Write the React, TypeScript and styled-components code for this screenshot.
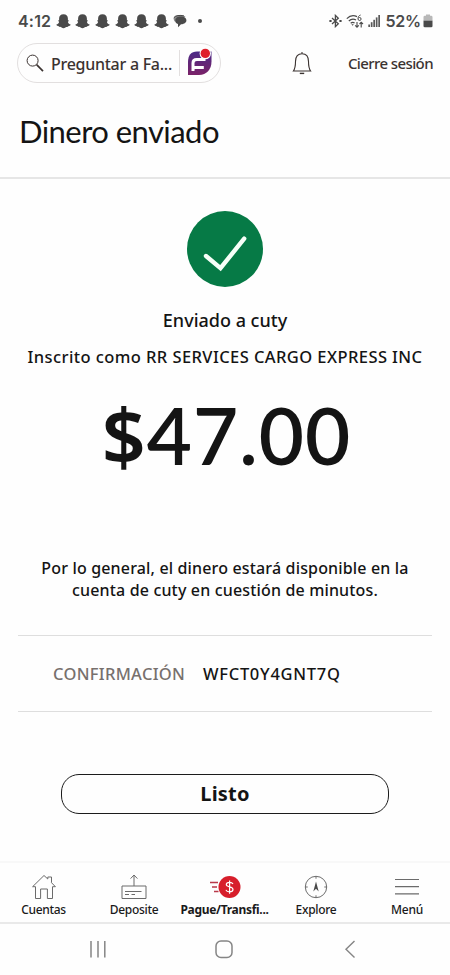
import React from 'react';
import styled, { createGlobalStyle } from 'styled-components';

const GlobalStyle = createGlobalStyle`
  * {
    box-sizing: border-box;
  }

  body {
    margin: 0;
    background: #fefefe;
    color: #141414;
    font-family: 'Noto Sans', 'Open Sans', sans-serif;
  }
`;

const Screen = styled.div`
  display: flex;
  flex-direction: column;
  width: 450px;
  height: 975px;
  overflow: hidden;
`;

const StatusBar = styled.div`
  display: flex;
  align-items: center;
  justify-content: space-between;
  height: 42px;
  padding: 0 17px 0 18px;
  color: #4a4a4a;
`;

const StatusGroup = styled.div<{ $gap: number }>`
  display: flex;
  align-items: center;
  gap: ${props => props.$gap}px;
`;

const StatusText = styled.span<{ $spacing?: number }>`
  font-family: Inter, 'Noto Sans', sans-serif;
  font-size: 16px;
  font-weight: 600;
  line-height: 20px;
  letter-spacing: ${props => props.$spacing ?? 0}px;
`;

const Dot = styled.span`
  width: 4px;
  height: 4px;
  margin-left: 6px;
  border-radius: 50%;
  background: #4a4a4a;
`;

const Header = styled.header`
  display: flex;
  align-items: center;
  height: 42px;
  padding: 0 17px;
`;

const SearchPill = styled.div`
  display: flex;
  align-items: center;
  width: 204px;
  height: 40px;
  padding: 0 7px 0 8px;
  border: 1px solid #e2dfdf;
  border-radius: 20px;
`;

const SearchText = styled.span`
  flex: 1;
  margin-left: 7px;
  padding-top: 1px;
  color: #3b3331;
  font-size: 16px;
  font-weight: 500;
  letter-spacing: -0.27px;
  white-space: nowrap;
`;

const PillDivider = styled.span`
  width: 1px;
  height: 26px;
  margin-right: 7px;
  background: #e2dfdf;
`;

const BellButton = styled.button`
  display: flex;
  margin: 0 0 0 71px;
  padding: 0;
  border: none;
  background: none;
`;

const SignOut = styled.a`
  margin-left: auto;
  color: #3b3331;
  font-size: 15px;
  font-weight: 500;
  letter-spacing: -0.6px;
  white-space: nowrap;
`;

const TitleBar = styled.div`
  display: flex;
  height: 95px;
  padding: 25px 19px 0;
  border-bottom: 2px solid #e6e6e6;
`;

const Title = styled.h1`
  margin: 0;
  font-family: Lato, 'Noto Sans', sans-serif;
  font-size: 31px;
  font-weight: 400;
  line-height: 44px;
  letter-spacing: -0.55px;
  white-space: nowrap;
`;

const Content = styled.main`
  display: flex;
  flex-direction: column;
  align-items: center;
  flex: 1;
  padding: 32px 18px 0;
`;

const SuccessBadge = styled.div`
  display: flex;
  width: 76px;
  height: 76px;
  border-radius: 50%;
  background: #067a46;
`;

const Recipient = styled.p`
  margin: 20px 0 0;
  font-size: 18px;
  font-weight: 500;
  line-height: 26px;
`;

const Enrolled = styled.p`
  margin: 13px 0 0;
  font-size: 16.5px;
  font-weight: 500;
  line-height: 22px;
  letter-spacing: 0.42px;
  white-space: nowrap;
`;

const Amount = styled.div`
  display: flex;
  align-items: baseline;
  height: 100px;
  margin-top: 17px;
  padding-left: 3px;
  font-family: Lato, 'Noto Sans', sans-serif;
  font-size: 78px;
  font-weight: 600;
  line-height: 100px;
  letter-spacing: 1px;
  white-space: nowrap;
`;

const Currency = styled.span`
  font-family: 'Noto Sans', sans-serif;
  font-size: 77px;
  font-weight: 600;
`;

const Notice = styled.p`
  margin: 72px 0 0;
  font-size: 16px;
  font-weight: 500;
  line-height: 22px;
  letter-spacing: 0.16px;
  text-align: center;
  white-space: nowrap;
`;

const Confirmation = styled.dl`
  display: flex;
  align-items: center;
  align-self: stretch;
  height: 77px;
  margin: 34px 0 0;
  padding-left: 35px;
  border: solid #dedede;
  border-width: 1px 0;
  font-size: 16.5px;
  line-height: 22px;
`;

const Term = styled.dt`
  width: 150px;
  color: #77706d;
  font-weight: 500;
  letter-spacing: 0.3px;
`;

const Code = styled.dd`
  margin: 0;
  font-weight: 500;
  letter-spacing: 0.72px;
`;

const DoneButton = styled.button`
  width: 328px;
  height: 40px;
  margin-top: 62px;
  padding: 0;
  border: 1px solid #1c1c1c;
  border-radius: 18px;
  background: #fefefe;
  color: #141414;
  font-family: inherit;
  font-size: 20px;
  font-weight: 700;
  line-height: 36px;
  letter-spacing: 0.2px;
`;

const TabBar = styled.nav`
  display: grid;
  grid-template-columns: 87px 94px 87px 96px 86px;
  height: 63px;
  border-top: 2px solid #f8f8f8;
  border-bottom: 2px solid #e9e9e9;
`;

const Tab = styled.a<{ $active?: boolean }>`
  display: flex;
  flex-direction: column;
  align-items: center;
  padding-top: 10px;
  color: #1a1a1a;
  font-size: 12px;
  font-weight: ${props => (props.$active ? 700 : 500)};
  line-height: 16px;
  letter-spacing: ${props => (props.$active ? -0.3 : -0.3)}px;
  white-space: nowrap;

  svg {
    display: block;
    margin-bottom: 2px;
  }
`;

const SystemNav = styled.div`
  display: flex;
  align-items: center;
  justify-content: space-between;
  height: 51px;
  padding: 0 93px 2px 88px;
`;

const SnapIcon = () => (
  <svg width="15" height="15" viewBox="0 0 15 15">
    <path
      d="M7.5 0.3C4.6 0.3 3.1 2 3.1 4.4V6.2L2 6.4 3.1 8C2.7 9.4 1.6 10.2 0.2 10.8 0.6 11.8 1.8 11.9 2.7 12.3 3.2 13.2 4.6 12.7 5.6 13.5 6.8 14.5 8.2 14.5 9.4 13.5 10.4 12.7 11.8 13.2 12.3 12.3 13.2 11.9 14.4 11.8 14.8 10.8 13.4 10.2 12.3 9.4 11.9 8L13 6.4 11.9 6.2V4.4C11.9 2 10.4 0.3 7.5 0.3Z"
      fill="#4a4a4a"
    />
  </svg>
);

const ChatIcon = () => (
  <svg width="14" height="14" viewBox="0 0 14 14">
    <path d="M0.7 4C1 2 3 1 6.5 1S12 2 12.5 3L3 4.5 2.5 8C1 7 0.5 5.5 0.7 4Z" fill="#8a8a8a" />
    <path d="M7.8 2.5C11 2.5 13.4 3.8 13.4 6.3S11 10.2 8 10.3L5 13.3V10C3.2 9.4 2.2 8.2 2.2 6.5 2.2 4 4.6 2.5 7.8 2.5Z" fill="#4a4a4a" />
    <path d="M0.8 3.8C2.4 1.5 7 0.8 11 1.9" stroke="#4a4a4a" fill="none" />
  </svg>
);

const BluetoothIcon = () => (
  <svg width="13" height="14" viewBox="0 0 13 14" fill="none" stroke="#4a4a4a" strokeWidth="1.3">
    <path d="M3 4L9.3 9.7 6.4 12.6V1.4L9.3 4.3 3 10" />
    <path d="M0.4 7H2.6M10.4 7H12.6" strokeWidth="1.8" />
  </svg>
);

const WifiIcon = () => (
  <svg width="18" height="15" viewBox="0 0 18 15" fill="none" stroke="#4a4a4a" strokeWidth="1.2">
    <path d="M0.8 4.6C4 1.3 8 1 11 2.6M2.8 7C5 5 7.8 4.8 10 6M4.7 9.2C6 8.2 7.4 8.2 8.6 9" />
    <path d="M5.4 10.3L6.6 11.8 7.8 10.3Z" fill="#4a4a4a" stroke="none" />
    <path d="M14.6 1C12.8 1.5 12 3 12.1 4.7A1.5 1.5 0 1 0 13.6 3.5C12.9 3.5 12.4 3.8 12.1 4.4" strokeWidth="1" />
    <path d="M11 8V13M9.2 11.3L11 13.1 12.8 11.3M15.2 13.5V8.3M13.5 10L15.2 8.2 17 10" strokeWidth="1.1" />
  </svg>
);

const SignalIcon = () => (
  <svg width="13" height="14" viewBox="0 0 13 14" fill="#5a5a5a">
    <rect x="0.3" y="10.5" width="1.7" height="2.5" />
    <rect x="2.8" y="8.2" width="1.7" height="4.8" />
    <rect x="5.3" y="5.8" width="1.7" height="7.2" />
    <rect x="7.8" y="3.4" width="1.7" height="9.6" />
    <rect x="10.3" y="1" width="1.7" height="12" />
  </svg>
);

const BatteryIcon = () => (
  <svg width="10" height="14" viewBox="0 0 10 14">
    <path d="M3 0.5H7V1.8H8.2Q9.5 1.8 9.5 3.2V7H0.5V3.2Q0.5 1.8 1.8 1.8H3Z" fill="#b8b8b8" />
    <path d="M0.5 6.8H9.5V12Q9.5 13.2 8.2 13.2H1.8Q0.5 13.2 0.5 12Z" fill="#4a4a4a" />
  </svg>
);

const SearchIcon = () => (
  <svg width="18" height="18" viewBox="0 0 18 18" fill="none" stroke="#3b3331">
    <circle cx="6.6" cy="6.6" r="5.5" strokeWidth="1" />
    <path d="M10.6 10.7L17 17.2" strokeWidth="1.7" />
  </svg>
);

const FargoIcon = () => (
  <svg width="26" height="30" viewBox="0 0 26 30">
    <defs>
      <linearGradient id="fargo" x1="0" y1="0" x2="0" y2="1">
        <stop offset="0" stopColor="#4b2a86" />
        <stop offset="1" stopColor="#7a2268" />
      </linearGradient>
    </defs>
    <path
      d="M10 3.5H24.5V13.5C24.5 21.5 19.5 27 12 27H1V14C1 7.5 4 3.5 10 3.5Z"
      fill="url(#fargo)"
    />
    <path d="M18.5 11.5H9.8Q6 11.5 6 15V23M6 19.4H16.8" fill="none" stroke="#fff" strokeWidth="3" />
    <path d="M6 23.2L8.2 20H6Z" fill="#fff" />
    <circle cx="18.3" cy="5.6" r="5.7" fill="#fefefe" />
    <circle cx="18.3" cy="5.4" r="4.7" fill="#df1e2b" />
  </svg>
);

const BellIcon = () => (
  <svg width="20" height="24" viewBox="0 0 20 24" fill="none" stroke="#3b3331" strokeWidth="1.1">
    <path d="M10 1V2.6M1.4 20H18.6C16.8 17.5 16.5 15 16.5 10.5 16.5 5.5 14 2.7 10 2.7S3.5 5.5 3.5 10.5C3.5 15 3.2 17.5 1.4 20Z" />
    <path d="M7.8 22.4H12.2" strokeWidth="1.4" />
  </svg>
);

const CheckIcon = () => (
  <svg width="76" height="76" viewBox="0 0 76 76" fill="none">
    <path d="M19 45L33.5 57.2 57.2 27.6" stroke="#f6fff8" strokeWidth="4.4" strokeLinecap="round" />
  </svg>
);

const HomeIcon = () => (
  <svg width="26" height="27" viewBox="0 0 26 27" fill="none" stroke="#6b6b6b">
    <path d="M4.5 13.7H1.6L13 2.5 16.8 6V4H20.5V9.7L24.4 13.7H21.5V25.5H16.4V16H9.6V25.5H4.5Z" />
  </svg>
);

const DepositIcon = () => (
  <svg width="26" height="27" viewBox="0 0 26 27" fill="none" stroke="#6b6b6b">
    <path d="M1 13H25V25.5H1ZM13 13V2M9.6 5.6L13 2 16.4 5.6" />
    <path d="M4 18.5H20.5M4 21.5H8M10.5 21.5H14" />
  </svg>
);

const TransferIcon = () => (
  <svg width="32" height="27" viewBox="0 0 32 27" fill="none">
    <path d="M1 9.5H9M3 14H8M5 18.5H9.5" stroke="#b83a4a" strokeWidth="1.3" />
    <circle cx="20.5" cy="14" r="11" fill="#d71e2b" />
    <path d="M24 11C23.3 9.7 22 9.3 20.6 9.3 18.6 9.3 17.3 10.2 17.3 11.6 17.3 14.8 24 12.9 24 16.5 24 18 22.6 18.9 20.6 18.9 18.8 18.9 17.4 18.2 16.9 16.9M20.6 7.5V20.8" stroke="#fff" strokeWidth="1.2" />
  </svg>
);

const CompassIcon = () => (
  <svg width="24" height="27" viewBox="0 0 24 27" fill="none" stroke="#6b6b6b">
    <circle cx="12" cy="14" r="10.7" />
    <path d="M12 3.3V5.7M12 22.3V24.7M1.3 14H3.7M20.3 14H22.7" />
    <path d="M12 8.5L9.3 18.5 12 15.7 14.7 18.5Z" fill="#4a4a4a" stroke="none" />
  </svg>
);

const MenuIcon = () => (
  <svg width="26" height="27" viewBox="0 0 26 27" stroke="#6b6b6b" strokeWidth="1.2">
    <path d="M1 6.5H25M1 13.7H25M1 20.9H25" />
  </svg>
);

const RecentsIcon = () => (
  <svg width="20" height="20" viewBox="0 0 20 20" stroke="#858585" strokeWidth="1.5">
    <path d="M3 2V18.5M10 2V18.5M16.8 2V18.5" />
  </svg>
);

const HomeKeyIcon = () => (
  <svg width="22" height="20" viewBox="0 0 22 20" fill="none" stroke="#858585" strokeWidth="1.5">
    <rect x="1" y="2" width="16" height="16.4" rx="5" />
  </svg>
);

const BackIcon = () => (
  <svg width="14" height="20" viewBox="0 0 14 20" fill="none" stroke="#858585" strokeWidth="1.4">
    <path d="M11.5 2L3 10.2 11.5 18.5" />
  </svg>
);

const tabs = [
  { label: 'Cuentas', icon: <HomeIcon /> },
  { label: 'Deposite', icon: <DepositIcon /> },
  { label: 'Pague/Transfi...', icon: <TransferIcon />, active: true },
  { label: 'Explore', icon: <CompassIcon /> },
  { label: 'Menú', icon: <MenuIcon /> },
];

const App: React.FC = () => {
  return (
    <Screen>
      <GlobalStyle />
      <StatusBar>
        <StatusGroup $gap={4.6}>
          <StatusText $spacing={0.2}>4:12</StatusText>
          {[0, 1, 2, 3, 4, 5].map(i => (
            <SnapIcon key={i} />
          ))}
          <ChatIcon />
          <Dot />
        </StatusGroup>
        <StatusGroup $gap={4}>
          <BluetoothIcon />
          <WifiIcon />
          <SignalIcon />
          <StatusGroup $gap={2}>
            <StatusText $spacing={-0.2}>52%</StatusText>
            <BatteryIcon />
          </StatusGroup>
        </StatusGroup>
      </StatusBar>

      <Header>
        <SearchPill>
          <SearchIcon />
          <SearchText>Preguntar a Fa...</SearchText>
          <PillDivider />
          <FargoIcon />
        </SearchPill>
        <BellButton aria-label="Notificaciones">
          <BellIcon />
        </BellButton>
        <SignOut>Cierre sesión</SignOut>
      </Header>

      <TitleBar>
        <Title>Dinero enviado</Title>
      </TitleBar>

      <Content>
        <SuccessBadge>
          <CheckIcon />
        </SuccessBadge>
        <Recipient>Enviado a cuty</Recipient>
        <Enrolled>Inscrito como RR SERVICES CARGO EXPRESS INC</Enrolled>
        <Amount>
          <Currency>$</Currency>47.00
        </Amount>
        <Notice>
          Por lo general, el dinero estará disponible en la
          <br />
          cuenta de cuty en cuestión de minutos.
        </Notice>
        <Confirmation>
          <Term>CONFIRMACIÓN</Term>
          <Code>WFCT0Y4GNT7Q</Code>
        </Confirmation>
        <DoneButton>Listo</DoneButton>
      </Content>

      <TabBar>
        {tabs.map(tab => (
          <Tab key={tab.label} $active={tab.active}>
            {tab.icon}
            {tab.label}
          </Tab>
        ))}
      </TabBar>

      <SystemNav>
        <RecentsIcon />
        <HomeKeyIcon />
        <BackIcon />
      </SystemNav>
    </Screen>
  );
};

export default App;
